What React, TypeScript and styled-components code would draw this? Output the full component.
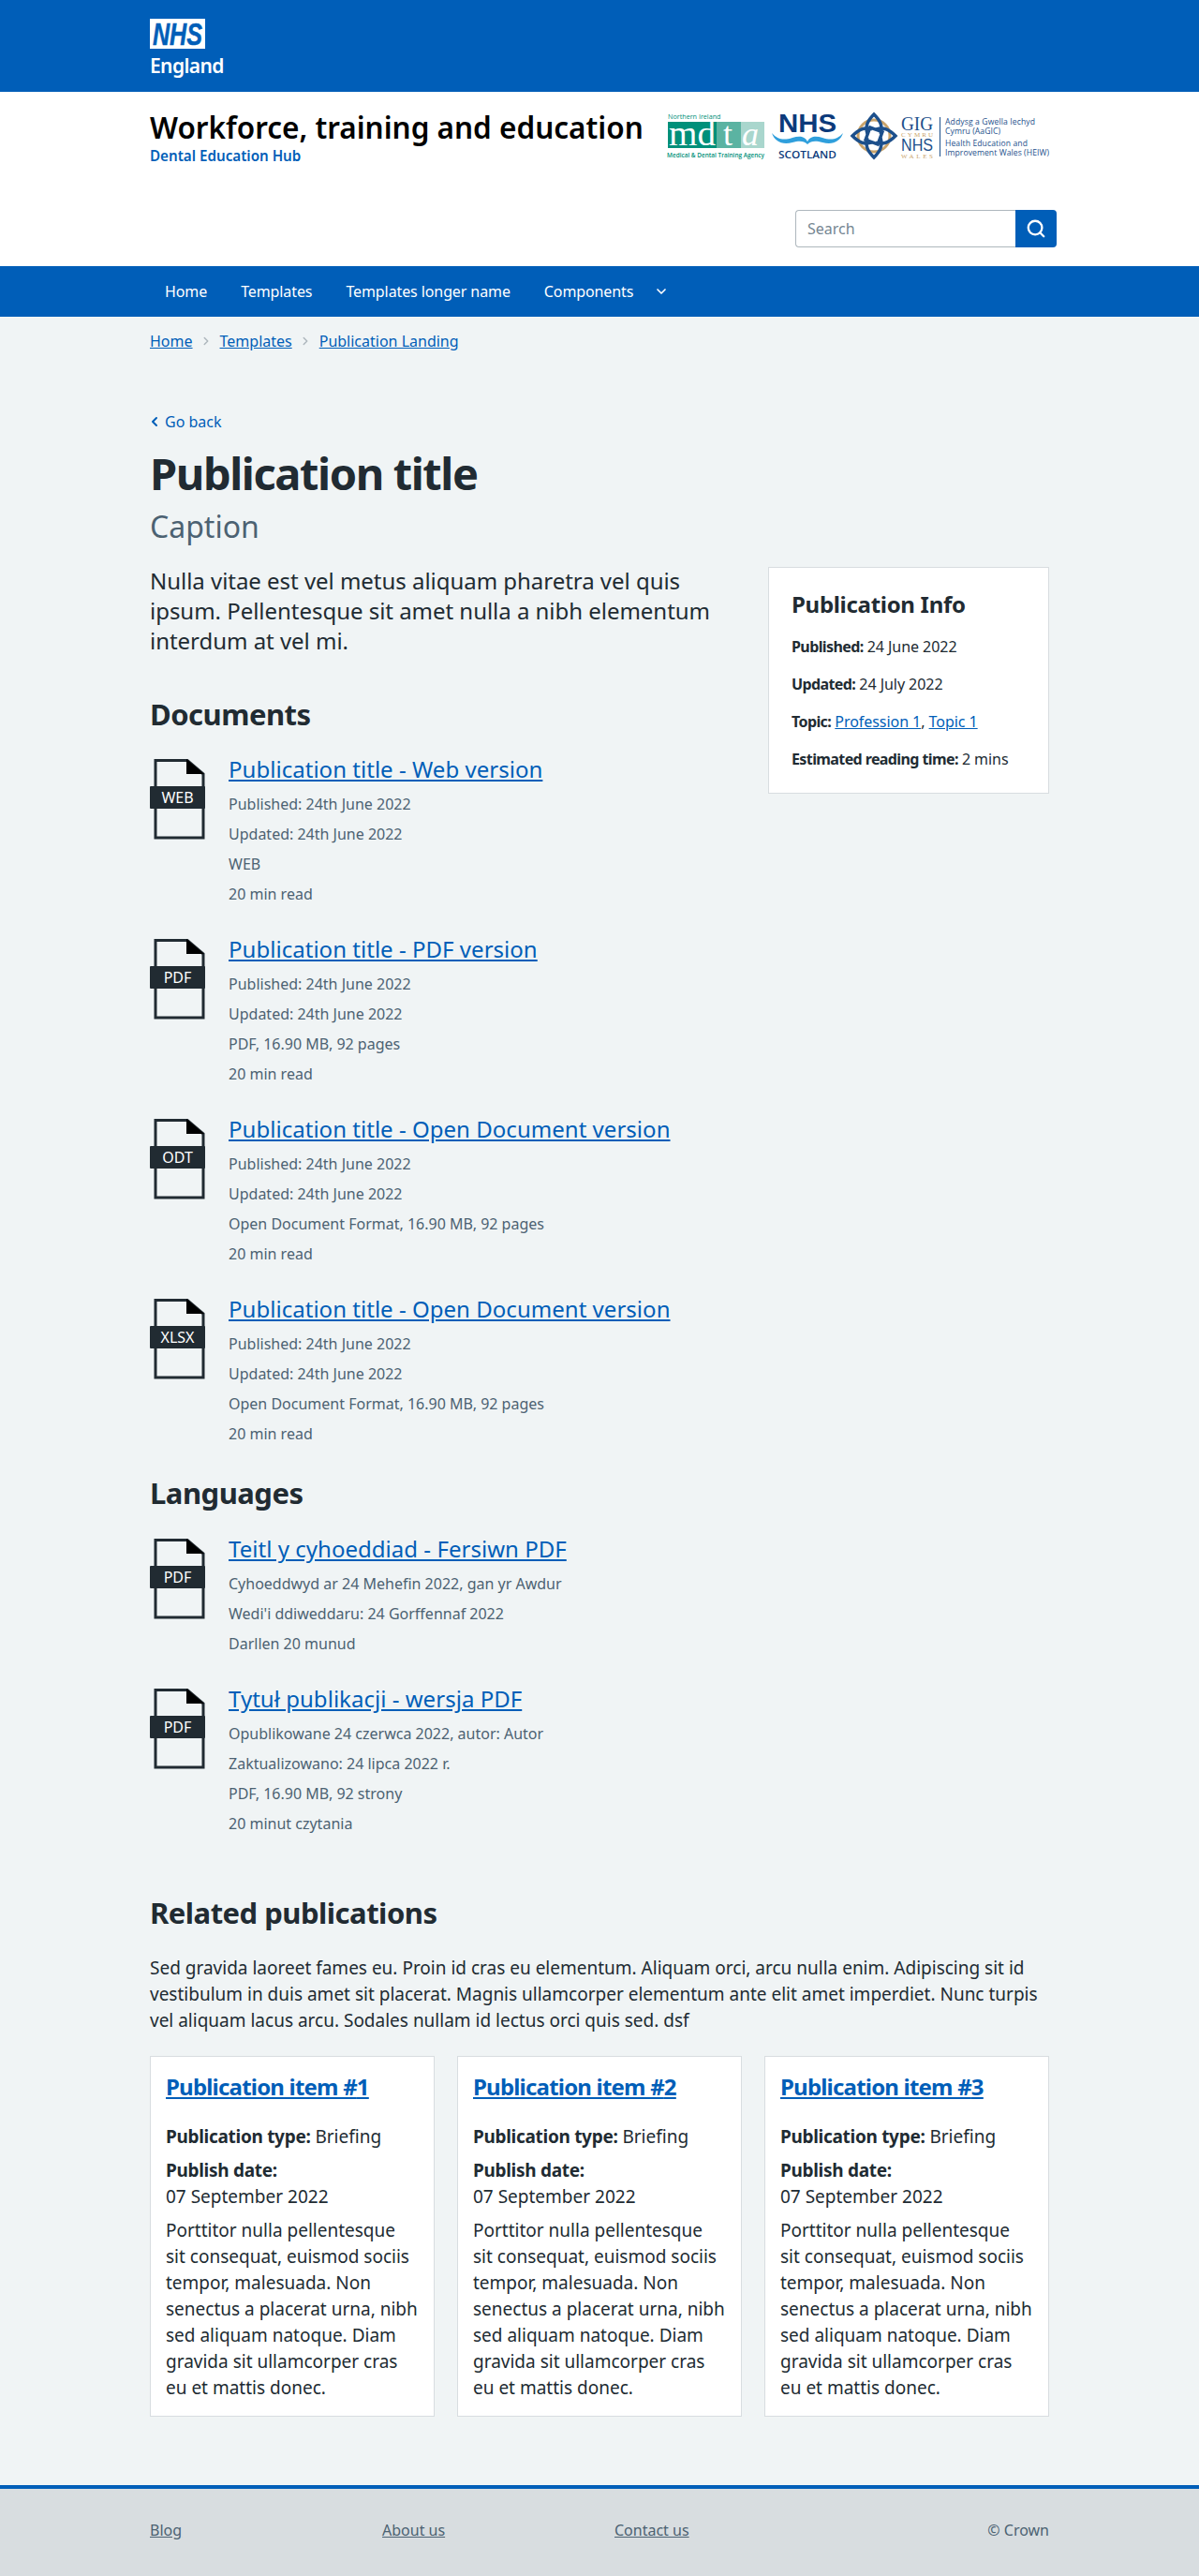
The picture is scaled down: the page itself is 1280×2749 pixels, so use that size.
import styled, { createGlobalStyle } from "styled-components";
import { ChevronDown, ChevronLeft, ChevronRight, Search } from "lucide-react";

const GlobalStyle = createGlobalStyle`
  body {
    margin: 0;
    background: #f0f4f5;
    color: #212b32;
    font-family: "Noto Sans", "Open Sans", sans-serif;
  }
  * { box-sizing: border-box; }
  a { color: #005eb8; }
  b { letter-spacing: -0.3px; }
`;

const Container = styled.div`
  width: 960px;
  margin: 0 auto;
`;
const BrandBar = styled.div`
  background: #005eb8;
  height: 98px;
  padding-top: 20px;
`;
const NhsLogo = styled.div`
  width: 59px;
  color: #fff;
`;
const LogoMark = styled.svg`
  display: block;
  overflow: visible;
`;
const NhsRegion = styled.div`
  font-size: 21px;
  line-height: 28px;
  font-weight: 600;
  letter-spacing: -0.6px;
  margin-top: 4px;
  white-space: nowrap;
`;
const WhiteBand = styled.div`
  background: #fff;
  height: 186px;
  padding-top: 20px;
`;
const TitleRow = styled.div`
  display: flex;
  justify-content: space-between;
  align-items: flex-start;
  height: 106px;
`;
const SiteTitle = styled.div`
  font-size: 31.5px;
  line-height: 36px;
  font-weight: 600;
  color: #000;
`;
const SiteSub = styled.div`
  font-size: 15.2px;
  line-height: 20px;
  font-weight: 600;
  color: #005eb8;
  margin-top: 2px;
`;
const Logos = styled.div`
  display: flex;
  gap: 8px;
  margin-top: 2px;
`;
const SearchRow = styled.div`
  display: flex;
  justify-content: flex-end;
  margin-right: -8px;
`;
const SearchInput = styled.div`
  width: 235px;
  height: 40px;
  border: 1px solid #aeb7bd;
  border-right: 0;
  border-radius: 4px 0 0 4px;
  padding-left: 12px;
  font-size: 16px;
  line-height: 38px;
  color: #768692;
`;
const SearchButton = styled.div`
  width: 44px;
  height: 40px;
  background: #005eb8;
  border-radius: 0 4px 4px 0;
  color: #fff;
  display: flex;
  align-items: center;
  justify-content: center;
`;
const Nav = styled.div`
  background: #005eb8;
  height: 54px;
`;
const NavList = styled.div`
  display: flex;
  align-items: center;
  height: 54px;
  padding-left: 16px;
  gap: 36px;
  color: #fff;
  font-size: 16px;
  letter-spacing: -0.1px;
`;
const NavMenu = styled.div`
  display: flex;
  align-items: center;
  gap: 22px;
`;
const Crumbs = styled.div`
  display: flex;
  align-items: center;
  height: 52px;
  font-size: 16px;
  gap: 7.5px;
  color: #aeb7bd;
`;
const BackLink = styled.a`
  display: flex;
  align-items: center;
  gap: 3px;
  margin-top: 48px;
  height: 24px;
  font-size: 16px;
  text-decoration: none;
  margin-left: -3px;
`;
const PageTitle = styled.h1`
  margin: 15px 0 0;
  font-size: 47px;
  line-height: 56px;
  font-weight: 700;
  letter-spacing: -1.4px;
`;
const Caption = styled.div`
  font-size: 32px;
  line-height: 40px;
  color: #4c6272;
  margin-top: 9px;
`;
const Columns = styled.div`
  display: flex;
  justify-content: space-between;
  align-items: flex-start;
  margin-top: 22px;
`;
const MainColumn = styled.div`
  width: 620px;
`;
const Lede = styled.p`
  margin: 0;
  font-size: 24px;
  line-height: 32px;
  letter-spacing: -0.03px;
`;
const InfoCard = styled.aside`
  width: 300px;
  height: 242px;
  margin-top: 1px;
  background: #fff;
  border: 1px solid #d8dde0;
  padding: 23px 24px;
`;
const InfoTitle = styled.div`
  font-size: 24px;
  line-height: 32px;
  font-weight: 700;
  letter-spacing: -0.3px;
  margin-bottom: 9px;
`;
const InfoLine = styled.div`
  font-size: 16px;
  line-height: 40px;
  letter-spacing: -0.05px;
  white-space: nowrap;
  b { letter-spacing: -0.6px; }
`;
const SectionTitle = styled.h2<{ $top: number }>`
  margin: ${(p) => p.$top}px 0 0;
  font-size: 31px;
  line-height: 40px;
  font-weight: 700;
  letter-spacing: -0.5px;
`;
const DocList = styled.div<{ $top: number }>`
  display: flex;
  flex-direction: column;
  gap: 32px;
  margin-top: ${(p) => p.$top}px;
`;
const DocRow = styled.div`
  display: flex;
  gap: 25px;
`;
const IconWrap = styled.div`
  position: relative;
  width: 59px;
  height: 86px;
  flex: none;
`;
const IconBadge = styled.div`
  position: absolute;
  left: 0;
  right: 0;
  top: 29px;
  height: 24px;
  background: #212b32;
  border-radius: 1px;
  color: #fff;
  font-size: 16px;
  line-height: 24px;
  text-align: center;
`;
const DocLink = styled.a`
  display: block;
  width: fit-content;
  margin: -5px 0 5px;
  font-size: 24px;
  line-height: 32px;
  letter-spacing: 0.03px;
`;
const DocMeta = styled.div`
  font-size: 16px;
  line-height: 32px;
  color: #4c6272;
`;
const Intro = styled.p`
  margin: 25px 0 0;
  font-size: 19px;
  line-height: 28px;
`;
const Cards = styled.div`
  display: grid;
  grid-template-columns: repeat(3, 1fr);
  gap: 24px;
  margin-top: 24px;
`;
const Card = styled.div`
  background: #fff;
  border: 1px solid #d8dde0;
  padding: 16px;
  height: 385px;
`;
const CardLink = styled.a`
  display: block;
  font-size: 24px;
  line-height: 32px;
  font-weight: 700;
  letter-spacing: -0.8px;
  margin-bottom: 23px;
`;
const CardText = styled.p<{ $gap?: number }>`
  margin: 0 0 ${(p) => p.$gap ?? 8}px;
  font-size: 19px;
  line-height: 28px;
`;
const Footer = styled.footer`
  margin-top: 73px;
  height: 97px;
  background: #d8dde0;
  border-top: 4px solid #005eb8;
`;
const FooterRow = styled(Container)`
  display: flex;
  padding-top: 32px;
  font-size: 16px;
  line-height: 24px;
  color: #4c6272;
  a { color: #4c6272; }
`;
const FooterCell = styled.div`
  width: 248px;
`;
const Copy = styled.div`
  margin-left: auto;
`;

type Doc = { badge: string; title: string; meta: string[] };

const documents: Doc[] = [
  { badge: "WEB", title: "Publication title - Web version", meta: ["Published: 24th June 2022", "Updated: 24th June 2022", "WEB", "20 min read"] },
  { badge: "PDF", title: "Publication title - PDF version", meta: ["Published: 24th June 2022", "Updated: 24th June 2022", "PDF, 16.90 MB, 92 pages", "20 min read"] },
  { badge: "ODT", title: "Publication title - Open Document version", meta: ["Published: 24th June 2022", "Updated: 24th June 2022", "Open Document Format, 16.90 MB, 92 pages", "20 min read"] },
  { badge: "XLSX", title: "Publication title - Open Document version", meta: ["Published: 24th June 2022", "Updated: 24th June 2022", "Open Document Format, 16.90 MB, 92 pages", "20 min read"] },
];

const languages: Doc[] = [
  { badge: "PDF", title: "Teitl y cyhoeddiad - Fersiwn PDF", meta: ["Cyhoeddwyd ar 24 Mehefin 2022, gan yr Awdur", "Wedi'i ddiweddaru: 24 Gorffennaf 2022", "Darllen 20 munud"] },
  { badge: "PDF", title: "Tytuł publikacji - wersja PDF", meta: ["Opublikowane 24 czerwca 2022, autor: Autor", "Zaktualizowano: 24 lipca 2022 r.", "PDF, 16.90 MB, 92 strony", "20 minut czytania"] },
];

const FileIcon = ({ label }: { label: string }) => (
  <IconWrap>
    <svg width="59" height="86" viewBox="0 0 59 86">
      <path d="M6 1.5h34l17 14.5v68H6z" fill="none" stroke="#212b32" strokeWidth="3" />
      <path d="M39 0l19 16H39z" fill="#000" />
    </svg>
    <IconBadge>{label}</IconBadge>
  </IconWrap>
);

const DocItem = ({ doc }: { doc: Doc }) => (
  <DocRow>
    <FileIcon label={doc.badge} />
    <div>
      <DocLink href="#">{doc.title}</DocLink>
      {doc.meta.map((line) => (
        <DocMeta key={line}>{line}</DocMeta>
      ))}
    </div>
  </DocRow>
);

const MdtaLogo = () => (
  <LogoMark width="104" height="50" viewBox="0 0 104 50">
    <text x="1" y="7" fontFamily="Open Sans" fontSize="7.2" fill="#00907a">Northern Ireland</text>
    <rect x="1" y="10" width="52" height="28" fill="#00907a" />
    <rect x="53" y="10" width="26" height="28" fill="#5bb3a2" />
    <rect x="79" y="10" width="25" height="28" fill="#a9d6cd" />
    <text x="2" y="35" fontFamily="Liberation Serif" fontSize="38" fill="#fff" textLength="50" lengthAdjust="spacingAndGlyphs">md</text>
    <text x="60" y="35" fontFamily="Liberation Serif" fontSize="36" fill="#fff">t</text>
    <text x="80" y="35" fontFamily="Liberation Serif" fontSize="36" fontStyle="italic" fill="#fff">a</text>
    <text x="0" y="48" fontFamily="Open Sans" fontWeight="600" fontSize="7" fill="#00907a" textLength="104" lengthAdjust="spacingAndGlyphs">Medical &amp; Dental Training Agency</text>
  </LogoMark>
);

const ScotlandLogo = () => (
  <LogoMark width="76" height="50" viewBox="0 0 76 50">
    <text x="7" y="21" fontFamily="Liberation Sans" fontWeight="700" fontSize="27" fill="#0c3a7b" textLength="62" lengthAdjust="spacingAndGlyphs">NHS</text>
    <path d="M0 22c6 7 13 8 22 5 7-2 13-2 16 4 3-6 9-6 16-4 9 3 16 2 22-5-3 9-11 13-22 10-7-2-12-2-16 2-4-4-9-4-16-2C11 35 3 31 0 22z" fill="#2f9fdc" />
    <text x="7" y="49" fontFamily="Open Sans" fontWeight="600" fontSize="11" fill="#0c3a7b" textLength="62" lengthAdjust="spacingAndGlyphs">SCOTLAND</text>
  </LogoMark>
);

const HeiwLogo = () => (
  <LogoMark width="212" height="50" viewBox="0 0 212 50">
    <circle cx="25" cy="25" r="17" fill="none" stroke="#c9a36a" strokeWidth="3" />
    <g fill="none" stroke="#1c4f8b" strokeWidth="3.4" transform="translate(25 25)">
      {[0, 90, 180, 270].map((angle) => (
        <path key={angle} transform={`rotate(${angle})`} d="M-7 -2C-10 -11 -6 -17 0 -23C6 -17 10 -11 7 -2" />
      ))}
      <rect x="-7" y="-7" width="14" height="14" transform="rotate(20)" />
    </g>
    <text x="54" y="19" fontFamily="Liberation Serif" fontSize="20" fill="#1c4f8b" textLength="34" lengthAdjust="spacingAndGlyphs">GIG</text>
    <text x="54" y="26" fontFamily="Liberation Serif" fontSize="7" fill="#c9a36a" textLength="34">CYMRU</text>
    <text x="54" y="41" fontFamily="Liberation Sans" fontSize="19" fill="#1c4f8b" textLength="34" lengthAdjust="spacingAndGlyphs">NHS</text>
    <text x="54" y="49" fontFamily="Liberation Serif" fontSize="7" fill="#c9a36a" textLength="34">WALES</text>
    <rect x="95" y="5" width="1" height="42" fill="#1c4f8b" />
    <g fontFamily="Open Sans" fontSize="8.6" fill="#1c4f8b">
      <text x="101" y="13" textLength="96">Addysg a Gwella Iechyd</text>
      <text x="101" y="23" textLength="59">Cymru (AaGIC)</text>
      <text x="101" y="36" textLength="88">Health Education and</text>
      <text x="101" y="46" textLength="111">Improvement Wales (HEIW)</text>
    </g>
  </LogoMark>
);

const App = () => (
  <>
    <GlobalStyle />
    <BrandBar>
      <Container>
        <NhsLogo>
          <LogoMark width="59" height="32" viewBox="0 0 59 32">
            <rect width="59" height="32" fill="#fff" />
            <text x="3" y="28" fontFamily="Liberation Sans" fontWeight="700" fontStyle="italic" fontSize="33" fill="#005eb8" stroke="#005eb8" strokeWidth="0.5" textLength="53" lengthAdjust="spacingAndGlyphs">NHS</text>
          </LogoMark>
          <NhsRegion>England</NhsRegion>
        </NhsLogo>
      </Container>
    </BrandBar>
    <WhiteBand>
      <Container>
        <TitleRow>
          <div>
            <SiteTitle>Workforce, training and education</SiteTitle>
            <SiteSub>Dental Education Hub</SiteSub>
          </div>
          <Logos>
            <MdtaLogo />
            <ScotlandLogo />
            <HeiwLogo />
          </Logos>
        </TitleRow>
        <SearchRow>
          <SearchInput>Search</SearchInput>
          <SearchButton>
            <Search size={22} strokeWidth={2.5} />
          </SearchButton>
        </SearchRow>
      </Container>
    </WhiteBand>
    <Nav>
      <Container>
        <NavList>
          <span>Home</span>
          <span>Templates</span>
          <span>Templates longer name</span>
          <NavMenu>
            <span>Components</span>
            <ChevronDown size={16} strokeWidth={2.5} />
          </NavMenu>
        </NavList>
      </Container>
    </Nav>
    <Container>
      <Crumbs>
        <a href="#">Home</a>
        <ChevronRight size={14} strokeWidth={2.5} />
        <a href="#">Templates</a>
        <ChevronRight size={14} strokeWidth={2.5} />
        <a href="#">Publication Landing</a>
      </Crumbs>
      <BackLink href="#">
        <ChevronLeft size={16} strokeWidth={3} />
        Go back
      </BackLink>
      <PageTitle>Publication title</PageTitle>
      <Caption>Caption</Caption>
      <Columns>
        <MainColumn>
          <Lede>
            Nulla vitae est vel metus aliquam pharetra vel quis ipsum. Pellentesque sit amet nulla a nibh elementum
            interdum at vel mi.
          </Lede>
          <SectionTitle $top={42}>Documents</SectionTitle>
          <DocList $top={28}>
            {documents.map((doc, i) => (
              <DocItem key={i} doc={doc} />
            ))}
          </DocList>
          <SectionTitle $top={27}>Languages</SectionTitle>
          <DocList $top={29}>
            {languages.map((doc, i) => (
              <DocItem key={i} doc={doc} />
            ))}
          </DocList>
        </MainColumn>
        <InfoCard>
          <InfoTitle>Publication Info</InfoTitle>
          <InfoLine>
            <b>Published:</b> 24 June 2022
          </InfoLine>
          <InfoLine>
            <b>Updated:</b> 24 July 2022
          </InfoLine>
          <InfoLine>
            <b>Topic:</b> <a href="#">Profession 1</a>, <a href="#">Topic 1</a>
          </InfoLine>
          <InfoLine>
            <b>Estimated reading time:</b> 2 mins
          </InfoLine>
        </InfoCard>
      </Columns>
      <SectionTitle $top={59}>Related publications</SectionTitle>
      <Intro>
        Sed gravida laoreet fames eu. Proin id cras eu elementum. Aliquam orci, arcu nulla enim. Adipiscing sit id
        vestibulum in duis amet sit placerat. Magnis ullamcorper elementum ante elit amet imperdiet. Nunc turpis vel
        aliquam lacus arcu. Sodales nullam id lectus orci quis sed. dsf
      </Intro>
      <Cards>
        {[1, 2, 3].map((n) => (
          <Card key={n}>
            <CardLink href="#">Publication item #{n}</CardLink>
            <CardText>
              <b>Publication type:</b> Briefing
            </CardText>
            <CardText>
              <b>Publish date:</b>
              <br />
              07 September 2022
            </CardText>
            <CardText $gap={0}>
              Porttitor nulla pellentesque sit consequat, euismod sociis tempor, malesuada. Non senectus a placerat
              urna, nibh sed aliquam natoque. Diam gravida sit ullamcorper cras eu et mattis donec.
            </CardText>
          </Card>
        ))}
      </Cards>
    </Container>
    <Footer>
      <FooterRow>
        <FooterCell>
          <a href="#">Blog</a>
        </FooterCell>
        <FooterCell>
          <a href="#">About us</a>
        </FooterCell>
        <FooterCell>
          <a href="#">Contact us</a>
        </FooterCell>
        <Copy>© Crown</Copy>
      </FooterRow>
    </Footer>
  </>
);

export default App;
